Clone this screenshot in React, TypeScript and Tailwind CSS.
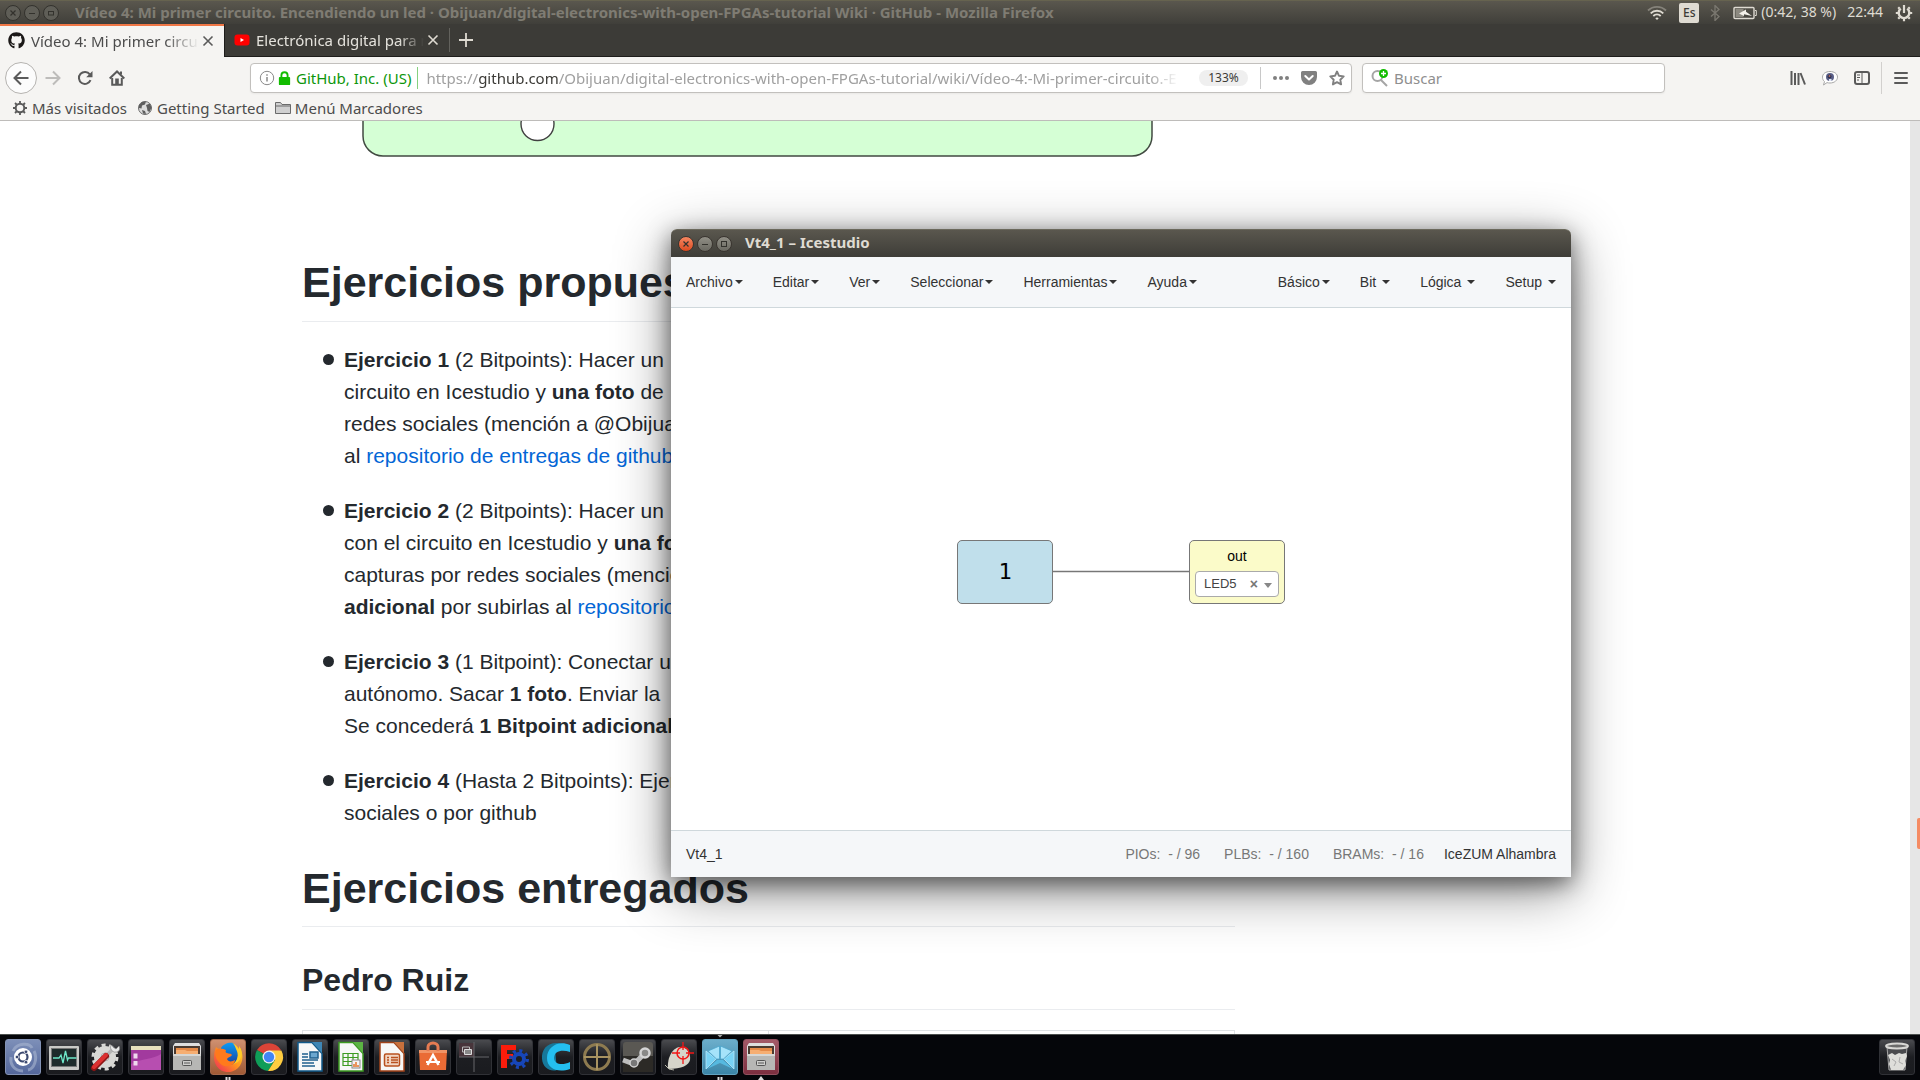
import React from "react";
import { FaGithub } from "react-icons/fa";

type IconProps = { children: React.ReactNode; size?: number; box?: string; className?: string };

function Svg({ children, size = 16, box = "0 0 16 16", className = "" }: IconProps) {
  return (
    <svg width={size} height={size} viewBox={box} fill="none" className={`shrink-0 ${className}`} aria-hidden="true">
      {children}
    </svg>
  );
}

/* ---------- desktop top panel ---------- */

function WindowButtons({ active }: { active?: boolean }) {
  const close = active ? "bg-linear-to-b from-[#f58660] to-[#dc4a1c] border-[#3a3530]" : "border-[#33322d] bg-[#5f5e57]";
  const other = active ? "bg-linear-to-b from-[#918f86] to-[#6a6961] border-[#3a3530]" : "border-[#33322d] bg-[#5f5e57]";
  const shape = "grid size-4 place-items-center rounded-full border text-[#33322d]";
  return (
    <div className="flex gap-[3px]">
      <button aria-label="Cerrar" className={`${shape} ${close}`}>
        <Svg size={8} box="0 0 8 8"><path d="M1.5 1.5l5 5m0-5l-5 5" stroke="currentColor" strokeWidth="1.2" /></Svg>
      </button>
      <button aria-label="Minimizar" className={`${shape} ${other}`}>
        <Svg size={8} box="0 0 8 8"><path d="M1 4.5h6" stroke="currentColor" /></Svg>
      </button>
      <button aria-label="Maximizar" className={`${shape} ${other}`}>
        <Svg size={8} box="0 0 8 8"><rect x="1.5" y={active ? 1.5 : 2.5} width="5" height={active ? 5 : 3.5} stroke="currentColor" /></Svg>
      </button>
    </div>
  );
}

function TopPanel() {
  return (
    <div className="flex h-6 shrink-0 items-center justify-between border-t border-[#66634f] bg-linear-to-b from-[#5a574e] to-[#403f3a] pr-[7px] pl-[5px] font-['Noto_Sans',sans-serif] text-sm">
      <div className="flex min-w-0 items-center">
        <WindowButtons />
        <span className="ml-4 truncate pb-0.5 text-[15px] leading-[22px] font-bold text-[#7f7c73]">
          Vídeo 4: Mi primer circuito. Encendiendo un led · Obijuan/digital-electronics-with-open-FPGAs-tutorial Wiki · GitHub - Mozilla Firefox
        </span>
      </div>
      <div className="flex shrink-0 items-center text-[#dfdbd2]">
        <Svg size={20} box="0 0 20 16">
          <path d="M1 5.5a13 13 0 0 1 18 0" stroke="#85827a" strokeWidth="1.8" />
          <path d="M3.7 8.3a9 9 0 0 1 12.6 0M6.3 11a5.3 5.3 0 0 1 7.4 0" stroke="#dfdbd2" strokeWidth="1.8" />
          <path d="M8.3 13.2a2.6 2.6 0 0 1 3.4 0L10 15z" fill="#dfdbd2" />
        </Svg>
        <span className="ml-3 grid h-5 w-5 place-items-center rounded-xs bg-[#dfdbd2] text-xs font-medium text-[#3c3b37]">Es</span>
        <Svg size={16} className="ml-2">
          <path d="M4 4.500l8 7-4 4v-15l4 4-8 7" stroke="#7b7870" strokeWidth="1.300" />
        </Svg>
        <svg width="24" height="14" viewBox="0 0 24 14" fill="none" className="ml-2.5" aria-hidden="true">
          <rect x="1" y="1.500" width="20" height="11" rx="1" stroke="#dfdbd2" strokeWidth="1.400" />
          <rect x="2.500" y="3" width="8" height="8" fill="#8c8980" />
          <path d="M22 4.500h1.300v5H22" stroke="#dfdbd2" />
          <path d="M6 7.500l7-4v2.300l6 4.200-8-1.700V10z" fill="#f4f1ea" />
        </svg>
        <span className="ml-1 pb-0.5">(0:42, 38 %)</span>
        <span className="ml-[11px] pb-0.5">22:44</span>
        <Svg size={18} box="0 0 18 18" className="ml-3">
          <path d="M5.800 4.600a5.300 5.300 0 1 0 6.400 0" stroke="#dfdbd2" strokeWidth="2.400" />
          <path d="M9 1v8M3 9H.8m16.400 0H15M4.600 4.600L3.200 3.200m10.200 1.400l1.400-1.400M4.600 13.400l-1.400 1.400m10.200-1.400l1.400 1.400M9 15v2.200" stroke="#dfdbd2" strokeWidth="2.200" />
        </Svg>
      </div>
    </div>
  );
}

/* ---------- browser chrome ---------- */

function TabStrip() {
  return (
    <div role="tablist" className="flex h-[33px] shrink-0 border-b border-[#1e1d1b] bg-[#3c3b37]">
      <div role="tab" aria-selected="true" className="-mb-px flex w-[224px] items-center border-t-2 border-[#f07746] bg-[#f5f4f2] pb-0.5 pl-2">
        <FaGithub className="size-[17px] shrink-0 text-[#1b1817]" />
        <span className="ml-1.5 w-[168px] overflow-hidden mask-linear-[90deg] mask-linear-from-80% whitespace-nowrap text-[#4c4c4c]">Vídeo 4: Mi primer circuito</span>
        <button aria-label="Cerrar pestaña" className="ml-[3px] text-[#5a5a5a]">
          <Svg size={12} box="0 0 12 12"><path d="M1.500 1.500l9 9m0-9l-9 9" stroke="currentColor" strokeWidth="1.600" /></Svg>
        </button>
      </div>
      <div role="tab" aria-selected="false" className="flex w-[225px] items-center border-l border-[#1e1d1b] pl-[9px]">
        <Svg size={16}>
          <rect x="0.500" y="2.500" width="15" height="11" rx="3" fill="#f00" />
          <path d="M6.500 6v4l3.500-2z" fill="#fff" />
        </Svg>
        <span className="ml-1.5 w-[168px] overflow-hidden mask-linear-[90deg] mask-linear-from-85% whitespace-nowrap text-[#e4e2dc]">Electrónica digital para makers</span>
        <button aria-label="Cerrar pestaña" className="ml-[3px] text-[#dfdbd2]">
          <Svg size={12} box="0 0 12 12"><path d="M1.500 1.500l9 9m0-9l-9 9" stroke="currentColor" strokeWidth="1.600" /></Svg>
        </button>
      </div>
      <button aria-label="Nueva pestaña" className="my-1 border-l border-[#63625d] pl-[9px] text-[#dfdbd2]">
        <Svg size={14} box="0 0 14 14"><path d="M7 0v14M0 7h14" stroke="currentColor" strokeWidth="1.800" /></Svg>
      </button>
    </div>
  );
}

function NavBar() {
  return (
    <div className="flex h-[42px] shrink-0 items-center px-[5px] text-[#5a5a5a]">
      <button aria-label="Atrás" className="grid size-8 place-items-center rounded-full border border-[#b5b3b0] bg-[#fcfcfc]">
        <Svg><path d="M15.500 8H1.500M8 1.500L1.500 8 8 14.500" stroke="currentColor" strokeWidth="2" /></Svg>
      </button>
      <button aria-label="Adelante" className="ml-2 text-[#bdbcba]">
        <Svg><path d="M.5 8h14M8 1.500L14.500 8 8 14.500" stroke="currentColor" strokeWidth="2" /></Svg>
      </button>
      <button aria-label="Recargar" className="ml-4">
        <Svg>
          <path d="M13.500 10.200A6 6 0 1 1 12.800 4.400" stroke="currentColor" strokeWidth="2" />
          <path d="M15.500 1v6.300H9.200z" fill="currentColor" />
        </Svg>
      </button>
      <button aria-label="Inicio" className="ml-4">
        <Svg>
          <path d="M.7 8.500L8 1.500l7.300 7" stroke="currentColor" strokeWidth="2" />
          <path d="M3.200 8v6.800h9.600V8" stroke="currentColor" strokeWidth="2" />
          <path d="M6.200 8.500h3.600V15H6.200z" fill="currentColor" /><path d="M12 1.500v3" stroke="currentColor" strokeWidth="2" />
        </Svg>
      </button>
      <div className="ml-[125px] flex h-[30px] min-w-0 flex-1 items-center rounded-sm border border-[#c2c0bd] bg-white px-2 shadow-xs">
        <Svg size={16}>
          <circle cx="8" cy="8" r="6.700" stroke="#8a8a8a" />
          <path d="M8 7v4.500M8 4.300v1.500" stroke="#8a8a8a" strokeWidth="1.500" />
        </Svg>
        <Svg size={15} box="0 0 14 16" className="ml-0.5">
          <path d="M3.700 7V4.600a3.300 3.300 0 0 1 6.600 0V7" stroke="#12bc00" strokeWidth="2" />
          <rect x="1" y="6.500" width="12" height="8.500" rx="1" fill="#12bc00" />
        </Svg>
        <span className="ml-1 shrink-0 text-[#0d960b]">GitHub, Inc. (US)</span>
        <span className="mr-2 ml-1.5 h-[22px] w-px shrink-0 bg-[#86d17f]" />
        <div role="textbox" aria-label="Dirección" tabIndex={0} className="min-w-0 flex-1 overflow-hidden mask-linear-[90deg] mask-linear-from-96% whitespace-nowrap text-[#a0a0a0]">
          https://<span className="text-[#3c3b37]">github.com</span>/Obijuan/digital-electronics-with-open-FPGAs-tutorial/wiki/Vídeo-4:-Mi-primer-circuito.-E
        </div>
        <button className="ml-5 h-4 w-[49px] shrink-0 rounded-full bg-[#efefef] text-xs leading-4 text-[#3c3b37]">133%</button>
        <span className="ml-3 h-[22px] w-px shrink-0 bg-[#c8c8c8]" />
        <button aria-label="Acciones" className="ml-3 text-[#808080]">
          <Svg><circle cx="2" cy="8" r="2" fill="currentColor" /><circle cx="8" cy="8" r="2" fill="currentColor" /><circle cx="14" cy="8" r="2" fill="currentColor" /></Svg>
        </button>
        <button aria-label="Guardar en Pocket" className="ml-3 text-[#808080]">
          <Svg>
            <path d="M1.500 1h13A1.500 1.500 0 0 1 16 2.500V7A8 8 0 0 1 0 7V2.500A1.500 1.500 0 0 1 1.500 1z" fill="currentColor" />
            <path d="M4.300 6L8 9.500 11.700 6" stroke="#fff" strokeWidth="2" strokeLinecap="round" strokeLinejoin="round" />
          </Svg>
        </button>
        <button aria-label="Añadir a marcadores" className="-mr-0.5 ml-3 text-[#808080]">
          <Svg><path d="M8 1.500l2 4.300 4.700.6-3.400 3.300.8 4.700L8 12.100l-4.100 2.300.8-4.700L1.300 6.400 6 5.800z" stroke="currentColor" strokeWidth="1.900" strokeLinejoin="round" /></Svg>
        </button>
      </div>
      <form className="ml-2.5 flex h-[30px] w-[303px] shrink-0 items-center rounded-sm border border-[#c2c0bd] bg-white px-2 shadow-xs">
        <Svg size={18} box="0 0 18 18">
          <circle cx="6.500" cy="7" r="5" stroke="#a5a5a5" strokeWidth="2" />
          <path d="M10 11l6 6" stroke="#a5a5a5" strokeWidth="2" />
          <circle cx="12.500" cy="4.500" r="4.500" fill="#12bc00" />
          <path d="M12.500 2v5M10 4.500h5" stroke="#fff" strokeWidth="1.300" />
        </Svg>
        <input aria-label="Buscar" placeholder="Buscar" className="ml-[5px] min-w-0 flex-1 outline-none placeholder:text-[#8f8f8f]" />
      </form>
      <button aria-label="Catálogo" className="ml-[125px]">
        <Svg><path d="M1.500 1v14M5 3v12M8.500 3v12" stroke="currentColor" strokeWidth="2" /><path d="M10.500 3L15 14.500" stroke="currentColor" strokeWidth="2" /></Svg>
      </button>
      <button aria-label="Sesión" className="ml-4">
        <Svg>
          <path d="M8 1.500c4.500 0 7.500 2.400 7.500 5.600S12.500 13 8 13c-1 0-2-.1-3-.4L1.500 15l1-3.400C1.200 10.500.5 9 .5 7.100.5 3.900 3.500 1.500 8 1.500z" fill="#fff" stroke="#a8a8a8" />
          <circle cx="8" cy="7" r="4" fill="#5b6088" /><circle cx="7.500" cy="6.500" r="2" fill="#2c2f52" /><circle cx="7.500" cy="6" r="1" fill="#b06d60" /><path d="M7 9h2.500v2H7z" fill="#dfe6f5" />
        </Svg>
      </button>
      <button aria-label="Barra lateral" className="ml-4">
        <Svg>
          <rect x="1" y="2" width="14" height="12" rx="2" stroke="currentColor" strokeWidth="2" />
          <path d="M8 2v12" stroke="currentColor" /><path d="M3 5h3M3 7.500h3M3 10h2" stroke="currentColor" />
        </Svg>
      </button>
      <span className="ml-[11px] h-8 w-px bg-[#d2d0ce]" />
      <button aria-label="Menú" className="mr-1.5 ml-[11px]">
        <Svg><path d="M2 3h12M2 8h12M2 13h12" stroke="currentColor" strokeWidth="2" strokeLinecap="round" /></Svg>
      </button>
    </div>
  );
}

function Bookmarks() {
  return (
    <nav className="flex h-[22px] shrink-0 items-center gap-2.5 border-b border-[#bebcba] pb-1 pl-3 leading-5 text-[#4c4c4c]">
      <a href="#mas" className="flex items-center gap-1">
        <Svg>
          <circle cx="8" cy="8" r="4.300" stroke="#5a5a5a" strokeWidth="2" />
          <path d="M8 1v3M8 12v3M1 8h3M12 8h3M3 3l2 2M11 11l2 2M13 3l-2 2M5 11l-2 2" stroke="#5a5a5a" strokeWidth="1.800" />
        </Svg>
        Más visitados
      </a>
      <a href="#inicio" className="flex items-center gap-1">
        <Svg>
          <circle cx="8" cy="8" r="6.500" fill="#dcdcdc" stroke="#6b6b6b" />
          <path d="M2 5l3-3 4-.5-1 3-3 1-.5 3L2 8zM9 5l4-1.500 1.500 4-2 4.500-2-1-.5-3zM5 10l3 1 1 3-3-.5z" fill="#5e5e5e" />
        </Svg>
        Getting Started
      </a>
      <button className="flex items-center gap-1">
        <Svg>
          <path d="M.5 13.500v-11h5l1.500 2h8.500v9z" fill="#d0d0d0" stroke="#6b6b6b" />
          <path d="M.5 6h15" stroke="#6b6b6b" />
        </Svg>
        Menú Marcadores
      </button>
    </nav>
  );
}

/* ---------- wiki page ---------- */

function BoardPicture() {
  return (
    <svg width="792" height="36" viewBox="0 0 792 36" fill="none" className="ml-[60px] block shrink-0" role="img" aria-label="Placa">
      <path d="M1 -5V15a20 20 0 0 0 20 20H770a20 20 0 0 0 20-20V-5z" fill="#d5ffd5" stroke="#414a41" strokeWidth="1.500" />
      <circle cx="175.500" cy="3" r="16.500" fill="#fff" stroke="#414141" strokeWidth="1.400" />
    </svg>
  );
}

function Item({ name, lines }: { name: string; lines: React.ReactNode[] }) {
  return (
    <li className="relative mb-[23px] before:absolute before:top-2.5 before:-left-[21px] before:size-[11px] before:rounded-full before:bg-[#24292e]">
      {lines.map((line, i) => (
        <span key={i} className="block whitespace-nowrap">
          {i === 0 && <strong>{name}</strong>}
          {line}
        </span>
      ))}
    </li>
  );
}

function WikiPage() {
  return (
    <main className="flex min-h-0 flex-1 overflow-hidden bg-white">
      <article className="ml-[302px] w-full max-w-[933px] font-['Liberation_Sans',sans-serif] text-[#24292e]">
        <BoardPicture />
        <h1 className="mt-[98px] border-b border-[#eaecef] pb-3 text-[43px] leading-[54px] font-bold whitespace-nowrap">Ejercicios propuestos</h1>
        <ul className="mt-[22px] pl-[42px] text-[21px] leading-8">
          <Item
            name="Ejercicio 1"
            lines={[
              " (2 Bitpoints): Hacer un",
              <>circuito en Icestudio y <strong>una foto</strong> de</>,
              "redes sociales (mención a @Obijuan",
              <>al <a href="#entregas" className="text-[#0366d6]">repositorio de entregas de github</a></>,
            ]}
          />
          <Item
            name="Ejercicio 2"
            lines={[
              " (2 Bitpoints): Hacer un",
              <>con el circuito en Icestudio y <strong>una foto</strong></>,
              "capturas por redes sociales (mención",
              <><strong>adicional</strong> por subirlas al <a href="#entregas" className="text-[#0366d6]">repositorio</a></>,
            ]}
          />
          <Item
            name="Ejercicio 3"
            lines={[
              " (1 Bitpoint): Conectar un",
              <>autónomo. Sacar <strong>1 foto</strong>. Enviar la</>,
              <>Se concederá <strong>1 Bitpoint adicional</strong></>,
            ]}
          />
          <Item name="Ejercicio 4" lines={[" (Hasta 2 Bitpoints): Ejercicio", "sociales o por github"]} />
        </ul>
        <h1 className="mt-8 border-b border-[#eaecef] pb-[11px] text-[43px] leading-[54px] font-bold">Ejercicios entregados</h1>
        <h2 className="mt-8 border-b border-[#eaecef] pb-2 text-[32px] leading-[42px] font-bold">Pedro Ruiz</h2>
        <table className="mt-5 w-full border-collapse">
          <tbody>
            <tr>
              <td className="h-12 w-1/2 border border-[#dfe2e5]" />
              <td className="h-12 w-1/2 border border-[#dfe2e5]" />
            </tr>
          </tbody>
        </table>
      </article>
      <div className="ml-auto w-2.5 shrink-0 bg-[#e6e6e6]">
        <div className="mt-[697px] ml-auto h-[31px] w-[3px] rounded-l-xs bg-[#f58b63]" />
      </div>
    </main>
  );
}

/* ---------- Icestudio window ---------- */

function Menu({ label, spaced }: { label: string; spaced?: boolean }) {
  return (
    <button className="flex items-center px-[15px]">
      {label}
      <span className={`${spaced ? "ml-1.5" : "ml-0.5"} border-x-4 border-t-4 border-x-transparent border-t-[#333]`} />
    </button>
  );
}

function IcestudioWindow() {
  return (
    <section className="absolute top-[229px] left-[671px] flex h-[648px] w-[900px] flex-col rounded-t-md bg-white font-['Liberation_Sans',sans-serif] text-sm text-[#333] shadow-[0_14px_56px_rgba(0,0,0,0.45),0_6px_22px_rgba(0,0,0,0.5)]">
      <header className="flex h-7 shrink-0 items-center rounded-t-md border-t border-[#6b695c] bg-linear-to-b from-[#5a574e] to-[#3e3d38] pl-[7px]">
        <WindowButtons active />
        <h2 className="ml-[13px] pb-1 font-['Noto_Sans',sans-serif] text-[15px] leading-5 font-bold text-[#dfdbd2]">Vt4_1 – Icestudio</h2>
      </header>
      <nav className="flex h-[51px] shrink-0 justify-between border-b border-[#cfd8dc] bg-[#f5f7f9]">
        <div className="flex">
          <Menu label="Archivo" />
          <Menu label="Editar" />
          <Menu label="Ver" />
          <Menu label="Seleccionar" />
          <Menu label="Herramientas" />
          <Menu label="Ayuda" />
        </div>
        <div className="flex">
          <Menu label="Básico" />
          <Menu label="Bit" spaced />
          <Menu label="Lógica" spaced />
          <Menu label="Setup" spaced />
        </div>
      </nav>
      <div className="relative flex-1">
        <svg className="absolute top-[262px] left-[382px]" width="136" height="3" viewBox="0 0 136 3" aria-hidden="true">
          <path d="M0 1.500h136" stroke="#dedede" strokeWidth="3" />
          <path d="M0 1.500h136" stroke="#777" />
        </svg>
        <div className="absolute top-[232px] left-[286px] grid h-16 w-24 place-items-center rounded-[5px] border border-[#777] bg-[#c0dfeb] font-['DejaVu_Sans_Mono',monospace] text-[22px] text-black">1</div>
        <div className="absolute top-[232px] left-[518px] flex h-16 w-24 flex-col items-center rounded-[5px] border border-[#777] bg-[#fbfbc9] px-[5px] pt-[5px]">
          <label htmlFor="pin" className="text-black">out</label>
          <div className="mt-[5px] flex h-[26px] w-full items-center rounded-sm border border-[#aaa] bg-white pr-1.5 pl-2">
            <select id="pin" className="min-w-0 flex-1 appearance-none text-[13px] text-[#444] outline-none">
              <option>LED5</option>
            </select>
            <button aria-label="Quitar" className="text-sm font-bold text-[#777]">×</button>
            <span className="mt-0.5 ml-1.5 border-x-4 border-t-[5px] border-x-transparent border-t-[#888]" />
          </div>
        </div>
      </div>
      <footer className="flex h-[47px] shrink-0 items-center border-t border-[#cfd8dc] bg-[#f5f7f9] px-[15px] text-[#777]">
        <span className="text-[#333]">Vt4_1</span>
        <span className="ml-auto whitespace-pre">PIOs:  - / 96</span>
        <span className="ml-6 whitespace-pre">PLBs:  - / 160</span>
        <span className="ml-6 whitespace-pre">BRAMs:  - / 16</span>
        <span className="ml-5 text-[#333]">IceZUM Alhambra</span>
      </footer>
    </section>
  );
}

/* ---------- dock ---------- */

const glass = "bg-linear-to-b from-[#4a4b4f] via-[#1d1e22] to-[#1a1b1f] border-[#303136]";

type App = { name: string; tile?: string; marks?: "two" | "one" | "both"; art: React.ReactNode };

const cabinet = (
  <>
    <path d="M6 4h24l2 3v24H4V7z" fill="#dedede" />
    <path d="M5 7h26v9H5z" fill="#4a3a30" />
    <path d="M7 9h22v6H7z" fill="#e58a48" /><path d="M7 11h9l2 1h11v3H7z" fill="#f6ae72" />
    <path d="M4 15h28v16H4z" fill="#b7b7b5" /><path d="M4 15h28v2H4z" fill="#d6d6d4" />
    <rect x="13.500" y="21.500" width="9" height="5" rx="1" fill="#cfcfcd" stroke="#555" /><path d="M15 24h6" stroke="#555" />
  </>
);

const documentArt = (color: string, dark: string, body: React.ReactNode) => (
  <>
    <path d="M6 3.500h14l10 11V32H6z" fill="#f7f7f7" stroke={dark} strokeWidth="1.500" />
    <path d="M20 3h10v11z" fill={color} />
    {body}
  </>
);

const apps: App[] = [
  {
    name: "Inicio", tile: "bg-linear-to-b from-[#7d8fb8] to-[#54679b] border-[#8392b5]",
    art: (
      <>
        <path d="M8 12C12 3 25 4 27 9M29 12c4 8 0 18-6 19M18 32C8 32 5 24 6 18" stroke="#a9b6d1" strokeWidth="3" opacity=".6" />
        <circle cx="18" cy="18" r="9" fill="#fff" />
        <circle cx="18" cy="18" r="4.500" stroke="#3b486f" strokeWidth="2.200" />
        <circle cx="12" cy="18" r="1.800" fill="#3b486f" stroke="#fff" strokeWidth=".7" />
        <circle cx="21" cy="12.800" r="1.800" fill="#3b486f" stroke="#fff" strokeWidth=".7" />
        <circle cx="21" cy="23.200" r="1.800" fill="#3b486f" stroke="#fff" strokeWidth=".7" />
      </>
    ),
  },
  {
    name: "Monitor del sistema",
    art: (
      <>
        <rect x="3" y="7" width="30" height="24" rx="1" fill="#c9c9c6" /><rect x="5.500" y="9.500" width="25" height="18" fill="#1e2b2b" stroke="#777" />
        <path d="M7 19h6l2-3 2 8 2.500-12 2 9 1-2h8" stroke="#6ee7c8" strokeWidth="1.300" />
      </>
    ),
  },
  {
    name: "Herramientas",
    art: (
      <>
        <circle cx="18" cy="18" r="11" fill="#d8d8d5" />
        <circle cx="18" cy="18" r="12" stroke="#d8d8d5" strokeWidth="3" strokeDasharray="4 3.540" />
        <circle cx="18" cy="18" r="4" fill="#eee" stroke="#aaa" />
        <path d="M19 17l7-7" stroke="#b5b5b5" strokeWidth="3.500" /><path d="M24 6a5 5 0 0 0 6 7c3-1 3-4 2-6l-3 3-3-2z" fill="#e6e6e6" stroke="#888" strokeWidth=".7" />
        <path d="M7 29l12-12" stroke="#8d1515" strokeWidth="6" strokeLinecap="round" /><path d="M7 28l12-12" stroke="#dc3030" strokeWidth="4" strokeLinecap="round" />
      </>
    ),
  },
  {
    name: "Escritorio",
    art: (
      <>
        <rect x="3" y="7" width="30" height="24" fill="#a23a9e" /><path d="M3 25c12-6 20-4 30-10v16H3z" fill="#c45bbd" opacity=".6" />
        <path d="M3 7h30v4H3z" fill="#e7e0bd" /><path d="M5.500 14.500h4v5h-4zM5.500 22h4v4.500h-4z" fill="#f0d8ee" />
      </>
    ),
  },
  { name: "Archivos", art: cabinet },
  {
    name: "Firefox", tile: "bg-linear-to-b from-[#cf9070] to-[#a05a35] border-[#a3674a]", marks: "two",
    art: (
      <>
        <defs>
          <linearGradient id="fox" x1="1" y1="0" x2="0" y2="1"><stop offset="0" stopColor="#ffe226" /><stop offset=".5" stopColor="#ff8f1f" /><stop offset="1" stopColor="#ee2260" /></linearGradient>
          <linearGradient id="globe" x1="0" y1="0" x2="0" y2="1"><stop offset="0" stopColor="#0a9bf4" /><stop offset="1" stopColor="#1b3f9d" /></linearGradient>
        </defs>
        <path d="M6 8c1 1 2 2 4 2 5-5 15-6 19 1l1-2c4 7 3 15-2 20A14 14 0 0 1 5 24C3 19 4 13 6 8z" fill="url(#fox)" />
        <path d="M11 9c2-4 8-6 12-5 2 2 3 4 5 7 1 6-1 14-8 15-8 0-11-9-9-17z" fill="url(#globe)" />
        <path d="M6 11c4-2 7-1 10 0-1 2 0 3 1 3 2 1 4 0 5 2-1 2-4 2-5 4 1 3 5 3 8 1 0 5-8 8-13 5-5-4-8-9-6-15z" fill="#ff7a1c" />
        <path d="M22 4c2 1 3 3 4 6 3 5 2 12-3 15 7-1 10-8 8-15-1-1-1-2-2-3v3c-2-3-4-5-7-6z" fill="#ffcb26" />
      </>
    ),
  },
  {
    name: "Chrome",
    art: (
      <>
        <path d="M18 18L6 11A14 14 0 0 1 30 11z" fill="#db4437" />
        <path d="M18 18L6 11a14 14 0 0 0 11 21l7-11z" fill="#0f9d58" />
        <path d="M18 11.500h12.400A14 14 0 0 1 17 32l7-11z" fill="#ffcd40" />
        <circle cx="18" cy="18" r="6.500" fill="#f1f1f1" /><circle cx="18" cy="18" r="5.200" fill="#4285f4" />
      </>
    ),
  },
  {
    name: "Writer",
    art: documentArt("#3e86b5", "#115a8b", <path d="M10 15h6M10 18h6M10 21h16M10 24h12M10 27h13M18 13h8v6h-8z" stroke="#20608f" strokeWidth="1.500" fill="#6ba6cf" />),
  },
  {
    name: "Calc",
    art: documentArt("#5bb443", "#3d9b22", <><path d="M10 14.500h15v12H10zM10 18.500h15M10 22.500h15M15 14v12M20 14v12" stroke="#3d9b22" strokeWidth="1.200" /><rect x="19" y="21" width="8" height="8" fill="#f4f4f4" stroke="#888" /><path d="M21 28v-3M23 28v-5M25 28v-2" stroke="#e6762c" strokeWidth="1.500" /></>),
  },
  {
    name: "Impress",
    art: documentArt("#c8703c", "#a2431a", <><rect x="10.500" y="15" width="15" height="12" rx="1.500" fill="#f2d6c4" stroke="#b9511f" strokeWidth="1.500" /><path d="M13 18.500h2m2 0h7M13 21h2m2 0h7M13 23.500h2m2 0h7" stroke="#b9511f" strokeWidth="1.500" /></>),
  },
  {
    name: "Software",
    art: (
      <>
        <path d="M4 11h28l-1 20H5z" fill="#ea6b35" /><path d="M4 11h28v3H4z" fill="#f19466" />
        <path d="M13 12V8a5 4 0 0 1 10 0v4" stroke="#e57b52" strokeWidth="3" />
        <path d="M12.500 26L18 16l5.500 10" stroke="#fff" strokeWidth="2.500" /><path d="M11 23h14" stroke="#fff" strokeWidth="2" />
      </>
    ),
  },
  {
    name: "Áreas de trabajo",
    art: (
      <>
        <path d="M3 4h15v14H3z" fill="#48353b" /><path d="M18 3v30M3 18h30" stroke="#66676a" />
        <path d="M6.500 8h7v5h-7z" stroke="#bbb" /><path d="M8.500 10.500h7v5h-7z" fill="#888" stroke="#ddd" />
      </>
    ),
  },
  {
    name: "FreeCAD",
    art: (
      <>
        <path d="M4 6h15v5h-9v4h6v5h-6v9H4z" fill="#fa1c0b" />
        <circle cx="22" cy="20" r="5" stroke="#1746b8" strokeWidth="4" /><circle cx="22" cy="20" r="8.300" stroke="#1746b8" strokeWidth="3.400" strokeDasharray="3 3.519" />
      </>
    ),
  },
  {
    name: "Cura",
    art: (
      <>
        <path d="M28 6C13 0 3 8 4 20c1 9 8 13 15 11l-2-21z" fill="#17789a" />
        <path d="M32 6v7c-8-3-16-1-16 6 0 6 8 8 16 4v7C20 34 9 30 9 19S20 1 32 6z" fill="#24bff0" />
      </>
    ),
  },
  {
    name: "Retícula",
    art: <><circle cx="18" cy="18" r="12.500" stroke="#8e7b50" strokeWidth="3" /><path d="M18 5v26M5 18h26" stroke="#a89361" strokeWidth="2" /></>,
  },
  {
    name: "Steam",
    art: (
      <>
        <rect x="3" y="3" width="30" height="30" rx="3" fill="#5a5853" /><path d="M3 17h30v16H3z" fill="#2c2a26" />
        <path d="M3 21l11 4 10-10" stroke="#bdbdbd" strokeWidth="5" /><circle cx="25" cy="14" r="4.500" fill="#8a8a88" stroke="#d5d5d5" strokeWidth="2.500" /><circle cx="14" cy="24" r="4" fill="#777" stroke="#d0d0d0" strokeWidth="1.500" />
      </>
    ),
  },
  {
    name: "Ratón",
    art: (
      <>
        <path d="M7 30C6 21 10 9 19 8c7 0 11 6 10 13-1 5-8 9-22 9z" fill="#d6d5ca" /><path d="M4 26l4 4 5 1" stroke="#b8b7aa" />
        <circle cx="22" cy="14" r="6" stroke="#f21616" strokeWidth="1.500" /><path d="M22 3v8m0 6v8M11 14h8m6 0h8" stroke="#f21616" strokeWidth="1.300" />
      </>
    ),
  },
  {
    name: "Icestudio", tile: "bg-linear-to-b from-[#6caecb] to-[#3b86a8] border-[#62a3c0]", marks: "both",
    art: (
      <>
        <path d="M4 12l10 8L4 30zM32 12l-10 8 10 10z" fill="#79d3f5" stroke="#b5e8fb" strokeWidth=".8" />
        <path d="M17.500 7v13l-3 0L6 12zM18.500 7v13h3L30 12z" fill="#a6e3fa" stroke="#4aa5cc" strokeWidth=".8" />
        <path d="M5 30l10-9h6l10 9-13-6z" fill="#56b9e0" />
      </>
    ),
  },
  { name: "Carpeta", tile: "bg-linear-to-b from-[#a35a68] to-[#7d2f40] border-[#92505e]", marks: "one", art: cabinet },
];

const trash = (
  <>
    <path d="M8 8h20l-2 23H10z" fill="#4a4b4e" stroke="#a5a5a5" />
    <path d="M9 16l4-2 3 2 4-2 3 1 4-1 1 3-2 5 1 4-3 5H12l-2-6 1-4z" fill="#dededa" />
    <path d="M13 20l4 3-2 4M21 18l-1 5 4 2" stroke="#aaa" /><ellipse cx="18" cy="7" rx="11" ry="2.500" fill="#6b6b6b" stroke="#d8d8d5" strokeWidth="2" />
  </>
);

function DockTile({ app }: { app: App }) {
  return (
    <button aria-label={app.name} title={app.name} className={`relative size-9 rounded-[3px] border ${app.tile ?? glass}`}>
      <svg viewBox="0 0 36 36" fill="none" className="absolute -inset-px size-9" aria-hidden="true">{app.art}</svg>
      {app.marks && (
        <svg viewBox="0 0 36 46" fill="none" className="absolute -top-1.5 -left-px h-[46px] w-9" aria-hidden="true">
          {app.marks === "one" ? <path d="M18 42l3 4h-6z" fill="#ddd" /> : <path d="M16.500 43v3M19.500 43v3" stroke="#ddd" strokeWidth="2" />}
          {app.marks === "both" && <path d="M15.500 1h5L18 3.500z" fill="#aaa" />}
        </svg>
      )}
    </button>
  );
}

function Dock() {
  return (
    <footer className="flex h-[46px] shrink-0 items-start justify-between border-t border-[#4c504e] bg-[#05060a] px-[5px] pt-1">
      <div className="flex gap-[5px]">
        {apps.map((app) => <DockTile key={app.name} app={app} />)}
      </div>
      <DockTile app={{ name: "Papelera", art: trash }} />
    </footer>
  );
}

export default function App() {
  return (
    <div className="relative flex h-screen flex-col overflow-hidden bg-white">
      <TopPanel />
      <div className="flex shrink-0 flex-col bg-[#f5f4f2] font-['Noto_Sans',sans-serif] text-[15px] leading-[22px]">
        <TabStrip />
        <NavBar />
        <Bookmarks />
      </div>
      <WikiPage />
      <IcestudioWindow />
      <Dock />
    </div>
  );
}
